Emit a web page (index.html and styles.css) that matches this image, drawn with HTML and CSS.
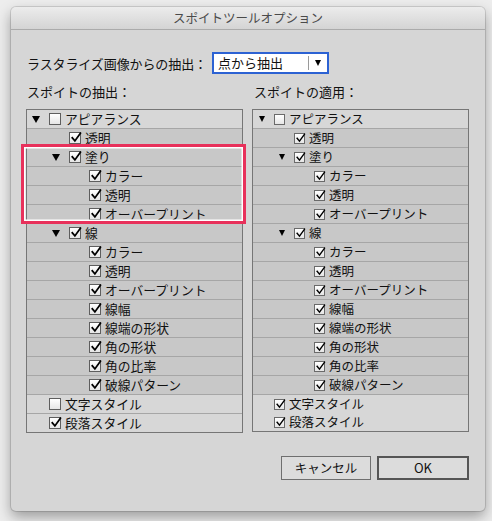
FILE: index.html
```html
<!DOCTYPE html>
<html lang="ja">
<head>
<meta charset="utf-8">
<title>スポイトツールオプション</title>
<link rel="stylesheet" href="styles.css">
</head>
<body>
<div class="window">
  <div class="titlebar">スポイトツールオプション</div>
  <div class="content">
    <div class="raster">
      <span class="raster-label">ラスタライズ画像からの抽出：</span>
      <div class="select">
        <span class="select-text">点から抽出</span>
        <span class="select-arrow"><i class="tri"></i></span>
      </div>
    </div>
    <div class="columns">
      <div class="col">
        <div class="col-label">スポイトの抽出：</div>
        <div class="list left">
          <div class="row top l0"><span class="tw"><i class="tri"></i></span><span class="cb"></span><span class="t">アピアランス</span></div>
          <div class="row l1"><span class="tw"></span><span class="cb on"><svg viewBox="0 0 12 12"><path d="M2.3 5.8 L4.9 8.9 L10.4 1.2"/></svg></span><span class="t">透明</span></div>
          <div class="row l1"><span class="tw"><i class="tri"></i></span><span class="cb on"><svg viewBox="0 0 12 12"><path d="M2.3 5.8 L4.9 8.9 L10.4 1.2"/></svg></span><span class="t">塗り</span></div>
          <div class="row l2"><span class="tw"></span><span class="cb on"><svg viewBox="0 0 12 12"><path d="M2.3 5.8 L4.9 8.9 L10.4 1.2"/></svg></span><span class="t">カラー</span></div>
          <div class="row l2"><span class="tw"></span><span class="cb on"><svg viewBox="0 0 12 12"><path d="M2.3 5.8 L4.9 8.9 L10.4 1.2"/></svg></span><span class="t">透明</span></div>
          <div class="row l2"><span class="tw"></span><span class="cb on"><svg viewBox="0 0 12 12"><path d="M2.3 5.8 L4.9 8.9 L10.4 1.2"/></svg></span><span class="t">オーバープリント</span></div>
          <div class="row l1"><span class="tw"><i class="tri"></i></span><span class="cb on"><svg viewBox="0 0 12 12"><path d="M2.3 5.8 L4.9 8.9 L10.4 1.2"/></svg></span><span class="t">線</span></div>
          <div class="row l2"><span class="tw"></span><span class="cb on"><svg viewBox="0 0 12 12"><path d="M2.3 5.8 L4.9 8.9 L10.4 1.2"/></svg></span><span class="t">カラー</span></div>
          <div class="row l2"><span class="tw"></span><span class="cb on"><svg viewBox="0 0 12 12"><path d="M2.3 5.8 L4.9 8.9 L10.4 1.2"/></svg></span><span class="t">透明</span></div>
          <div class="row l2"><span class="tw"></span><span class="cb on"><svg viewBox="0 0 12 12"><path d="M2.3 5.8 L4.9 8.9 L10.4 1.2"/></svg></span><span class="t">オーバープリント</span></div>
          <div class="row l2"><span class="tw"></span><span class="cb on"><svg viewBox="0 0 12 12"><path d="M2.3 5.8 L4.9 8.9 L10.4 1.2"/></svg></span><span class="t">線幅</span></div>
          <div class="row l2"><span class="tw"></span><span class="cb on"><svg viewBox="0 0 12 12"><path d="M2.3 5.8 L4.9 8.9 L10.4 1.2"/></svg></span><span class="t">線端の形状</span></div>
          <div class="row l2"><span class="tw"></span><span class="cb on"><svg viewBox="0 0 12 12"><path d="M2.3 5.8 L4.9 8.9 L10.4 1.2"/></svg></span><span class="t">角の形状</span></div>
          <div class="row l2"><span class="tw"></span><span class="cb on"><svg viewBox="0 0 12 12"><path d="M2.3 5.8 L4.9 8.9 L10.4 1.2"/></svg></span><span class="t">角の比率</span></div>
          <div class="row l2"><span class="tw"></span><span class="cb on"><svg viewBox="0 0 12 12"><path d="M2.3 5.8 L4.9 8.9 L10.4 1.2"/></svg></span><span class="t">破線パターン</span></div>
          <div class="row top l0"><span class="tw"></span><span class="cb"></span><span class="t">文字スタイル</span></div>
          <div class="row top l0"><span class="tw"></span><span class="cb on"><svg viewBox="0 0 12 12"><path d="M2.3 5.8 L4.9 8.9 L10.4 1.2"/></svg></span><span class="t">段落スタイル</span></div>
          <div class="highlight"></div>
        </div>
      </div>
      <div class="col">
        <div class="col-label">スポイトの適用：</div>
        <div class="list right">
          <div class="row top l0"><span class="tw"><i class="tri"></i></span><span class="cb"></span><span class="t">アピアランス</span></div>
          <div class="row l1"><span class="tw"></span><span class="cb on"><svg viewBox="0 0 12 12"><path d="M2.3 5.8 L4.9 8.9 L10.4 1.2"/></svg></span><span class="t">透明</span></div>
          <div class="row l1"><span class="tw"><i class="tri"></i></span><span class="cb on"><svg viewBox="0 0 12 12"><path d="M2.3 5.8 L4.9 8.9 L10.4 1.2"/></svg></span><span class="t">塗り</span></div>
          <div class="row l2"><span class="tw"></span><span class="cb on"><svg viewBox="0 0 12 12"><path d="M2.3 5.8 L4.9 8.9 L10.4 1.2"/></svg></span><span class="t">カラー</span></div>
          <div class="row l2"><span class="tw"></span><span class="cb on"><svg viewBox="0 0 12 12"><path d="M2.3 5.8 L4.9 8.9 L10.4 1.2"/></svg></span><span class="t">透明</span></div>
          <div class="row l2"><span class="tw"></span><span class="cb on"><svg viewBox="0 0 12 12"><path d="M2.3 5.8 L4.9 8.9 L10.4 1.2"/></svg></span><span class="t">オーバープリント</span></div>
          <div class="row l1"><span class="tw"><i class="tri"></i></span><span class="cb on"><svg viewBox="0 0 12 12"><path d="M2.3 5.8 L4.9 8.9 L10.4 1.2"/></svg></span><span class="t">線</span></div>
          <div class="row l2"><span class="tw"></span><span class="cb on"><svg viewBox="0 0 12 12"><path d="M2.3 5.8 L4.9 8.9 L10.4 1.2"/></svg></span><span class="t">カラー</span></div>
          <div class="row l2"><span class="tw"></span><span class="cb on"><svg viewBox="0 0 12 12"><path d="M2.3 5.8 L4.9 8.9 L10.4 1.2"/></svg></span><span class="t">透明</span></div>
          <div class="row l2"><span class="tw"></span><span class="cb on"><svg viewBox="0 0 12 12"><path d="M2.3 5.8 L4.9 8.9 L10.4 1.2"/></svg></span><span class="t">オーバープリント</span></div>
          <div class="row l2"><span class="tw"></span><span class="cb on"><svg viewBox="0 0 12 12"><path d="M2.3 5.8 L4.9 8.9 L10.4 1.2"/></svg></span><span class="t">線幅</span></div>
          <div class="row l2"><span class="tw"></span><span class="cb on"><svg viewBox="0 0 12 12"><path d="M2.3 5.8 L4.9 8.9 L10.4 1.2"/></svg></span><span class="t">線端の形状</span></div>
          <div class="row l2"><span class="tw"></span><span class="cb on"><svg viewBox="0 0 12 12"><path d="M2.3 5.8 L4.9 8.9 L10.4 1.2"/></svg></span><span class="t">角の形状</span></div>
          <div class="row l2"><span class="tw"></span><span class="cb on"><svg viewBox="0 0 12 12"><path d="M2.3 5.8 L4.9 8.9 L10.4 1.2"/></svg></span><span class="t">角の比率</span></div>
          <div class="row l2"><span class="tw"></span><span class="cb on"><svg viewBox="0 0 12 12"><path d="M2.3 5.8 L4.9 8.9 L10.4 1.2"/></svg></span><span class="t">破線パターン</span></div>
          <div class="row top l0"><span class="tw"></span><span class="cb on"><svg viewBox="0 0 12 12"><path d="M2.3 5.8 L4.9 8.9 L10.4 1.2"/></svg></span><span class="t">文字スタイル</span></div>
          <div class="row top l0"><span class="tw"></span><span class="cb on"><svg viewBox="0 0 12 12"><path d="M2.3 5.8 L4.9 8.9 L10.4 1.2"/></svg></span><span class="t">段落スタイル</span></div>
        </div>
      </div>
    </div>
    <div class="buttons">
      <button class="btn">キャンセル</button>
      <button class="btn default">OK</button>
    </div>
  </div>
</div>
</body>
</html>
```
FILE: styles.css
```css
* { box-sizing: border-box; }
html, body { margin: 0; padding: 0; }
body {
  background: #ededed;
  font-family: "Noto Sans CJK JP", "Noto Sans", sans-serif;
  color: #111;
  width: 492px;
  height: 521px;
  overflow: hidden;
}
.window {
  margin: 7px 0 0 11px;
  width: 474px;
  height: 504px;
  background: #d6d6d6;
  border-radius: 5px;
  box-shadow: 0 0 0 1px rgba(0,0,0,0.12), 0 6px 14px rgba(0,0,0,0.35);
  overflow: hidden;
}
.titlebar {
  height: 23px;
  background: linear-gradient(#ececec, #d4d4d4);
  border-bottom: 1px solid #ababab;
  text-align: center;
  font-size: 12.5px;
  line-height: 22px;
  color: #4a4a4a;
}
.content {
  padding: 22px 16px 0 15px;
}
.raster {
  display: flex;
  align-items: center;
  height: 22px;
  padding-left: 1px;
}
.raster-label {
  width: 185px;
  font-size: 13px;
  letter-spacing: -0.1px;
  white-space: nowrap;
}
.select {
  width: 117px;
  height: 22px;
  border: 2px solid #2c62d3;
  background: #fff;
  display: flex;
  align-items: center;
}
.select-text {
  flex: 1;
  font-size: 13px;
  padding-left: 4px;
  line-height: 16px;
}
.select-arrow {
  width: 19px;
  height: 14px;
  border-left: 1px solid #9a9a9a;
  display: flex;
  align-items: center;
  justify-content: center;
}
.select-arrow .tri {
  border-left-width: 3.5px;
  border-right-width: 3.5px;
  border-top-width: 6px;
}
.columns {
  display: grid;
  grid-template-columns: 217px 217px;
  column-gap: 9px;
  margin-top: 9px;
}
.col-label {
  font-size: 13px;
  line-height: 18px;
  height: 18px;
  margin-bottom: 8px;
  padding-left: 1px;
}
.col + .col .col-label { padding-left: 2px; }
.list {
  position: relative;
  border: 1px solid #767676;
  background: #c8c8c8;
}
.row {
  height: 19px;
  border-bottom: 1px solid #a6a6a6;
  background: #c8c8c8;
  display: flex;
  align-items: center;
  font-size: 12.5px;
  white-space: nowrap;
}
.list.left .row { font-size: 12.8px; }
.row:nth-last-child(2), .list.right .row:last-child { border-bottom: 0; height: 18px; }
.row.top { background: #d7d7d7; }
.list.left .l0 { padding-left: 5px; }
.list.left .l1 { padding-left: 25px; }
.list.left .l2 { padding-left: 45px; }
.list.left .tw { width: 17px; }
.list.right .l0 { padding-left: 6px; }
.list.right .l1 { padding-left: 26px; }
.list.right .l2 { padding-left: 46px; }
.list.right .tw { width: 15px; }
.tw {
  flex: none;
  display: flex;
  align-items: center;
  height: 100%;
}
.tri {
  display: block;
  width: 0;
  height: 0;
  border-left: 4px solid transparent;
  border-right: 4px solid transparent;
  border-top: 7px solid #000;
}
.list.right .tri {
  border-left-width: 3.5px;
  border-right-width: 3.5px;
  border-top-width: 6px;
}
.cb {
  flex: none;
  position: relative;
  width: 12px;
  height: 12px;
  border: 1px solid #5e5e5e;
  background: linear-gradient(#ffffff, #e6e6e6);
  margin-right: 4px;
}
.list.right .cb {
  width: 11px;
  height: 11px;
  border-color: #6a6a6a;
}
.cb svg {
  position: absolute;
  left: -0.5px;
  top: -1px;
  width: 12px;
  height: 12px;
  overflow: visible;
}
.cb svg path {
  fill: none;
  stroke: #000;
  stroke-width: 1.8;
  stroke-linecap: square;
  stroke-linejoin: miter;
}
.list.right .cb svg { width: 11px; height: 11px; left: -0.5px; top: -0.5px; }
.list.right .cb svg path { stroke-width: 1.5; }
.t { line-height: 16px; }
.highlight {
  position: absolute;
  left: -6px;
  top: 34px;
  width: 225px;
  height: 80px;
  border: 3px solid #e8315b;
  box-shadow: inset 0 0 0 1.5px #ffffff;
  pointer-events: none;
}
.buttons {
  display: flex;
  justify-content: flex-end;
  gap: 6px;
  margin-top: 23px;
}
.btn {
  font-family: "Noto Sans CJK JP", "Noto Sans", sans-serif;
  font-size: 12.5px;
  color: #111;
  height: 24px;
  padding: 0;
  background: #dcdcdc;
  border: 1px solid #6f6f6f;
  border-radius: 0;
  width: 90px;
  line-height: 20px;
}
.btn.default {
  width: 92px;
  border: 2px solid #555555;
  font-size: 13px;
}
```
